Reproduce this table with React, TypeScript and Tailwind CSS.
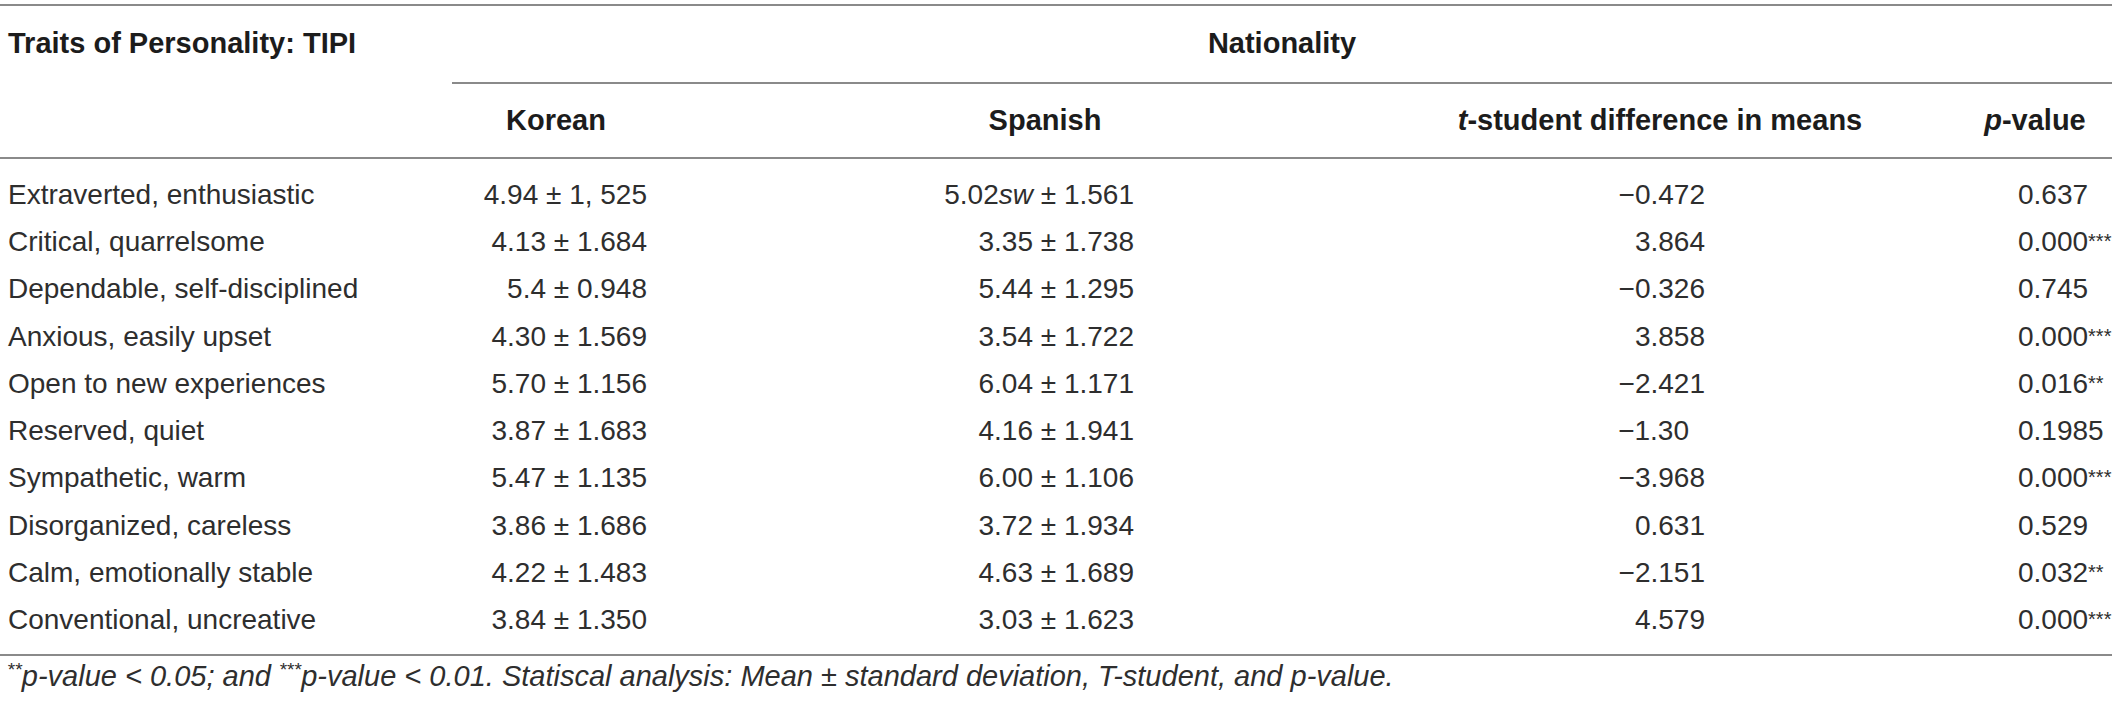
const cols = "grid grid-cols-[452px_208px_770px_460px_222px]";

type Row = {
  trait: string;
  korean: string;
  spanish: React.ReactNode;
  t: string;
  tPad?: boolean;
  p: string;
  stars?: string;
};

const rows: Row[] = [
  { trait: "Extraverted, enthusiastic", korean: "4.94 ± 1, 525", spanish: <>5.02<i>sw</i> ± 1.561</>, t: "−0.472", p: "0.637" },
  { trait: "Critical, quarrelsome", korean: "4.13 ± 1.684", spanish: "3.35 ± 1.738", t: "3.864", p: "0.000", stars: "***" },
  { trait: "Dependable, self-disciplined", korean: "5.4 ± 0.948", spanish: "5.44 ± 1.295", t: "−0.326", p: "0.745" },
  { trait: "Anxious, easily upset", korean: "4.30 ± 1.569", spanish: "3.54 ± 1.722", t: "3.858", p: "0.000", stars: "***" },
  { trait: "Open to new experiences", korean: "5.70 ± 1.156", spanish: "6.04 ± 1.171", t: "−2.421", p: "0.016", stars: "**" },
  { trait: "Reserved, quiet", korean: "3.87 ± 1.683", spanish: "4.16 ± 1.941", t: "−1.30", tPad: true, p: "0.1985" },
  { trait: "Sympathetic, warm", korean: "5.47 ± 1.135", spanish: "6.00 ± 1.106", t: "−3.968", p: "0.000", stars: "***" },
  { trait: "Disorganized, careless", korean: "3.86 ± 1.686", spanish: "3.72 ± 1.934", t: "0.631", p: "0.529" },
  { trait: "Calm, emotionally stable", korean: "4.22 ± 1.483", spanish: "4.63 ± 1.689", t: "−2.151", p: "0.032", stars: "**" },
  { trait: "Conventional, uncreative", korean: "3.84 ± 1.350", spanish: "3.03 ± 1.623", t: "4.579", p: "0.000", stars: "***" },
];

export default function App() {
  return (
    <div className="w-[2128px] h-[704px] bg-white pt-[4px] font-['Liberation_Sans',Arial,sans-serif] text-[#2e2e2e]">
      <div className="w-[2112px]">
        <div className="h-[2px] bg-[#8a8a8a]" />

        {/* header row 1 */}
        <div className={`${cols} h-[78px] text-[29px] font-bold text-[#1c1c1c]`}>
          <div className="flex items-center pl-[8px] pb-[2px]">Traits of Personality: TIPI</div>
          <div className="col-span-4 flex items-center justify-center border-b-2 border-[#8a8a8a]">
            Nationality
          </div>
        </div>

        {/* header row 2 */}
        <div className={`${cols} h-[73px] items-center text-[29px] font-bold text-[#1c1c1c]`}>
          <div />
          <div className="text-center">Korean</div>
          <div className="text-center">Spanish</div>
          <div className="text-center">
            <i>t</i>-student difference in means
          </div>
          <div className="pl-[68px] text-center">
            <i>p</i>-value
          </div>
        </div>
        <div className="h-[2px] bg-[#8a8a8a]" />

        {/* body */}
        <div className="pt-[12px] pb-[10px] text-[28px]">
          {rows.map((r) => (
            <div key={r.trait} className={`${cols} h-[47.3px] items-center leading-none`}>
              <div className="pl-[8px]">{r.trait}</div>
              <div className="text-right pr-[13px]">{r.korean}</div>
              <div className="text-right pr-[296px]">{r.spanish}</div>
              <div className={`text-right ${r.tPad ? "pr-[201px]" : "pr-[185px]"}`}>{r.t}</div>
              <div className="pl-[128px] whitespace-nowrap">
                {r.p}
                {r.stars && <sup className="text-[20px] relative top-[-3px]">{r.stars}</sup>}
              </div>
            </div>
          ))}
        </div>
        <div className="h-[2px] bg-[#8a8a8a]" />

        {/* footnote */}
        <div className="mt-[5px] pl-[7px] text-[29px] leading-[30px] italic text-[#2e2e2e]">
          <sup className="text-[19px]">**</sup>p-value &lt; 0.05; and <sup className="text-[19px]">***</sup>p-value &lt; 0.01.
          Statiscal analysis: Mean ± standard deviation, T-student, and p-value.
        </div>
      </div>
    </div>
  );
}
